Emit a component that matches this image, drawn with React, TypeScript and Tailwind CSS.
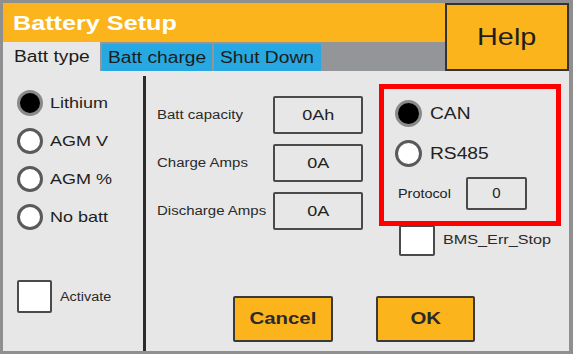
const font = { fontFamily: '"Liberation Sans", Arial, sans-serif' };

function T({ children, className = "" }: { children: React.ReactNode; className?: string }) {
  return <span className={`inline-block origin-left scale-x-[1.2] whitespace-nowrap ${className}`}>{children}</span>;
}

function Radio({ on, big }: { on?: boolean; big?: boolean }) {
  const size = big ? "h-[27px] w-[27px]" : "h-[26px] w-[26px]";
  return on ? (
    <span className={`${size} shrink-0 rounded-full border-[3px] border-[#8a8a8a] bg-black`} />
  ) : (
    <span className={`${size} shrink-0 rounded-full border-[3px] border-[#5a5a5a] bg-white`} />
  );
}

function Field({ label, value }: { label: string; value: string }) {
  return (
    <div className="flex h-[38px] items-center">
      <div className="w-[116px] text-[12.5px] text-[#2a2a2a]">
        <T>{label}</T>
      </div>
      <div className="flex h-full w-[90px] items-center justify-center rounded-[2px] border-2 border-[#4a4a4a] text-[15px] text-[#222]">
        <span className="inline-block scale-x-[1.2]">{value}</span>
      </div>
    </div>
  );
}

export default function App() {
  const types = ["Lithium", "AGM V", "AGM %", "No batt"];
  return (
    <div
      style={font}
      className="flex h-[354px] w-[573px] flex-col overflow-hidden border-t-[3px] border-r-4 border-b-[3px] border-l-[3px] border-[#8f8f8f] bg-[#e6e7e6]"
    >
      {/* header */}
      <div className="flex h-[68px]">
        <div className="flex flex-1 flex-col">
          <div className="flex h-[39px] items-center bg-[#fcb41c] pl-[10px] text-[21px] font-bold text-white">
            <T>Battery Setup</T>
          </div>
          <div className="flex flex-1 items-end bg-[#939598] pr-[2px] text-[16px] text-[#1c1c1c]">
            <div className="flex h-full w-[97px] items-center bg-[#e6e7e6] pl-[11px]">
              <T>Batt type</T>
            </div>
            <div className="ml-[2px] flex h-[27px] w-[110px] items-center bg-[#27a8e0] pl-[6px]">
              <T>Batt charge</T>
            </div>
            <div className="ml-[2px] flex h-[27px] w-[107px] items-center bg-[#27a8e0] pl-[6px]">
              <T>Shut Down</T>
            </div>
          </div>
        </div>
        <div className="flex w-[124px] items-center justify-center border-2 border-[#333] bg-[#fcb41c] text-[24px] font-medium text-[#1e1e1e]">
          <span className="inline-block scale-x-[1.2]">Help</span>
        </div>
      </div>

      {/* body */}
      <div className="flex flex-1">
        <div className="flex w-[140px] flex-col pt-[13px] pl-[14px]">
          {types.map((t, i) => (
            <div key={t} className="flex h-[38px] items-center gap-[7px] text-[15px] text-[#1e1e1e]">
              <Radio on={i === 0} />
              <T>{t}</T>
            </div>
          ))}
          <div className="mt-[44px] flex items-center gap-[8px]">
            <span className="h-[33px] w-[35px] rounded-[2px] border-2 border-[#4a4a4a] bg-white" />
            <span className="text-[12px] text-[#2a2a2a]">
              <T>Activate</T>
            </span>
          </div>
        </div>
        <div className="mt-[5px] w-[3px] bg-[#2b2b2b]" />

        <div className="flex flex-1 flex-col">
          <div className="flex">
            <div className="flex flex-col gap-[10px] pt-[25px] pl-[11px]">
              <Field label="Batt capacity" value="0Ah" />
              <Field label="Charge Amps" value="0A" />
              <Field label="Discharge Amps" value="0A" />
            </div>
            <div className="ml-[16px] flex flex-col pt-[13px]">
              <div className="flex h-[142px] w-[182px] flex-col border-[5px] border-[#ff0000] pt-[11px] pl-[11px] text-[16px] font-medium text-[#222]">
                <div className="flex items-center gap-[8px]">
                  <Radio on big />
                  <T>CAN</T>
                </div>
                <div className="mt-[13px] flex items-center gap-[8px]">
                  <Radio big />
                  <T>RS485</T>
                </div>
                <div className="mt-[10px] flex items-center pl-[3px]">
                  <span className="w-[68px] text-[12px] font-normal">
                    <T>Protocol</T>
                  </span>
                  <span className="flex h-[33px] w-[61px] items-center justify-center rounded-[2px] border-2 border-[#4a4a4a] text-[15px] font-normal">
                    0
                  </span>
                </div>
              </div>
              <div className="-mt-[1px] flex items-center gap-[8px] pl-[20px]">
                <span className="h-[31px] w-[36px] rounded-[2px] border-2 border-[#4a4a4a] bg-white" />
                <span className="text-[13.5px] text-[#2a2a2a]">
                  <T>BMS_Err_Stop</T>
                </span>
              </div>
            </div>
          </div>

          <div className="mt-auto flex gap-[43px] pb-[9px] pl-[87px] text-[17px] font-bold text-[#2a2a2a]">
            <div className="flex h-[46px] w-[100px] items-center justify-center rounded-[2px] border-2 border-[#3a3a3a] bg-[#fcb41c]">
              <span className="inline-block scale-x-[1.2]">Cancel</span>
            </div>
            <div className="flex h-[46px] w-[99px] items-center justify-center rounded-[2px] border-2 border-[#3a3a3a] bg-[#fcb41c]">
              <span className="inline-block scale-x-[1.2]">OK</span>
            </div>
          </div>
        </div>
      </div>
    </div>
  );
}
